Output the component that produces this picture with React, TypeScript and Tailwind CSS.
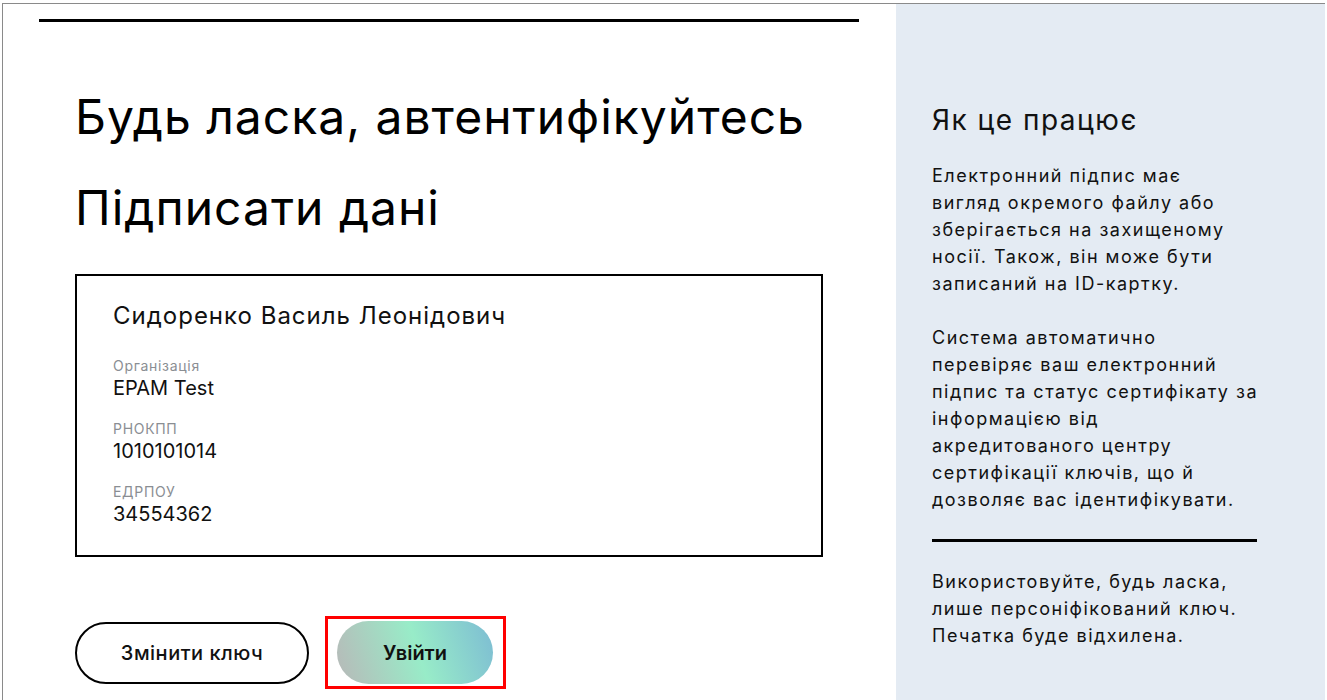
import React from "react";

const font = { fontFamily: "Inter, 'Noto Sans', sans-serif" };

function Field({ label, value, first }: { label: string; value: string; first?: boolean }) {
  return (
    <div className={first ? "mt-[24px]" : "mt-[19px]"}>
      <div className="text-[14px] leading-[20px] tracking-[0.7px] text-[#8a8e93]">{label}</div>
      <div className="text-[20px] leading-[24px] text-[#111]">{value}</div>
    </div>
  );
}

export default function App() {
  return (
    <div className="w-[1327px] h-[700px] bg-white overflow-hidden" style={font}>
      <div className="mt-[3px] ml-[2px] mr-[2px] h-[697px] border-t border-l border-[#8a8a8a] flex">
        {/* Left */}
        <div className="w-[893px] flex flex-col">
          <div className="ml-[36px] mt-[15px] w-[820px] h-[3px] bg-black" />
          <div className="pl-[72px] flex flex-col">
            <h1 className="mt-[66px] text-[48px] leading-[58px] tracking-[1px] text-black font-normal whitespace-nowrap">
              Будь ласка, автентифікуйтесь
            </h1>
            <h2 className="mt-[33px] text-[48px] leading-[58px] tracking-[1px] text-black font-normal whitespace-nowrap">
              Підписати дані
            </h2>
            <div className="mt-[37px] w-[748px] h-[283px] border-2 border-black pl-[36px] pt-[24px]">
              <div className="text-[24px] leading-[32px] tracking-[1px] text-[#111] whitespace-nowrap">
                Сидоренко Василь Леонідович
              </div>
              <Field label="Організація" value="EPAM Test" first />
              <Field label="РНОКПП" value="1010101014" />
              <Field label="ЕДРПОУ" value="34554362" />
            </div>
            <div className="mt-[64px] flex items-center gap-[28px]">
              <button className="w-[234px] h-[62px] rounded-full border-2 border-black bg-white text-[20px] font-medium tracking-[0.5px] text-[#111]">
                Змінити ключ
              </button>
              <div className="relative">
                <button className="w-[156px] h-[63px] rounded-full text-[20px] font-semibold text-[#111] bg-[linear-gradient(72deg,#b8b8b8_0%,#98ecc8_52%,#7dbcd3_100%)]">
                  Увійти
                </button>
                <div className="absolute -left-[12px] -right-[13px] -top-[5px] -bottom-[5px] border-[3px] border-[#ff0000] pointer-events-none" />
              </div>
            </div>
          </div>
        </div>
        {/* Right */}
        <div className="w-[429px] bg-[#e4ebf3] pl-[36px] flex flex-col">
          <h3 className="mt-[98px] text-[28px] leading-[36px] tracking-[1.5px] text-[#111] font-normal">Як це працює</h3>
          <p className="mt-[24px] text-[18px] leading-[27px] tracking-[1.5px] text-[#111] whitespace-nowrap">
            Електронний підпис має
            <br />
            вигляд окремого файлу або
            <br />
            зберігається на захищеному
            <br />
            носії. Також, він може бути
            <br />
            записаний на ID-картку.
          </p>
          <p className="mt-[27px] text-[18px] leading-[27px] tracking-[1.5px] text-[#111] whitespace-nowrap">
            Система автоматично
            <br />
            перевіряє ваш електронний
            <br />
            підпис та статус сертифікату за
            <br />
            інформацією від
            <br />
            акредитованого центру
            <br />
            сертифікації ключів, що й
            <br />
            дозволяє вас ідентифікувати.
          </p>
          <div className="mt-[26px] w-[325px] h-[3px] bg-black" />
          <p className="mt-[26px] text-[18px] leading-[27px] tracking-[1.5px] text-[#111] whitespace-nowrap">
            Використовуйте, будь ласка,
            <br />
            лише персоніфікований ключ.
            <br />
            Печатка буде відхилена.
          </p>
        </div>
      </div>
    </div>
  );
}
